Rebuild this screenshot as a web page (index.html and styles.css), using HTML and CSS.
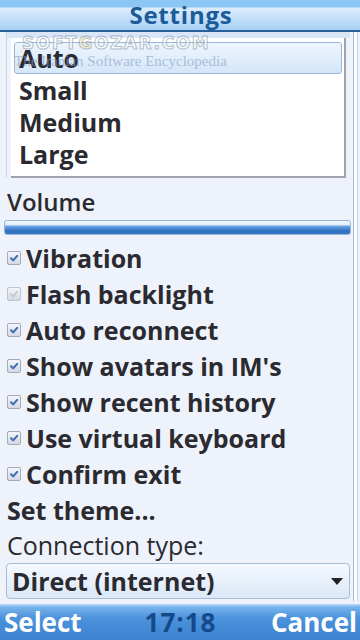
FILE: index.html
```html
<!DOCTYPE html>
<html>
<head>
<meta charset="utf-8">
<link rel="stylesheet" href="styles.css">
</head>
<body>
<div class="screen">
  <div class="header"><span class="title">Settings</span></div>
  <div class="body">
    <div class="main">
      <div class="frame">
        <div class="listbox">
          <div class="opt sel">Auto</div>
          <div class="opt">Small</div>
          <div class="opt">Medium</div>
          <div class="opt">Large</div>
        </div>
      </div>
      <div class="label vol">Volume</div>
      <div class="volume"></div>
      <div class="checks">
        <div class="check"><span class="box on"><svg viewBox="0 0 10 10"><path d="M2 5.2 L4.2 7.4 L8.2 2.8" /></svg></span>Vibration</div>
        <div class="check"><span class="box off"><svg viewBox="0 0 10 10"><path d="M2 5.2 L4.2 7.4 L8.2 2.8" /></svg></span>Flash backlight</div>
        <div class="check"><span class="box on"><svg viewBox="0 0 10 10"><path d="M2 5.2 L4.2 7.4 L8.2 2.8" /></svg></span>Auto reconnect</div>
        <div class="check"><span class="box on"><svg viewBox="0 0 10 10"><path d="M2 5.2 L4.2 7.4 L8.2 2.8" /></svg></span>Show avatars in IM's</div>
        <div class="check"><span class="box on"><svg viewBox="0 0 10 10"><path d="M2 5.2 L4.2 7.4 L8.2 2.8" /></svg></span>Show recent history</div>
        <div class="check"><span class="box on"><svg viewBox="0 0 10 10"><path d="M2 5.2 L4.2 7.4 L8.2 2.8" /></svg></span>Use virtual keyboard</div>
        <div class="check"><span class="box on"><svg viewBox="0 0 10 10"><path d="M2 5.2 L4.2 7.4 L8.2 2.8" /></svg></span>Confirm exit</div>
      </div>
      <div class="label item">Set theme...</div>
      <div class="label conn">Connection type:</div>
      <div class="dropdown"><span>Direct (internet)</span><svg class="arrow" viewBox="0 0 12 7"><path d="M0 0 H12 L6 7 Z"/></svg></div>
    </div>
    <div class="scroll"><div class="track"></div></div>
  </div>
  <div class="softkeys">
    <span class="sk left">Select</span>
    <span class="clock">17:18</span>
    <span class="sk right">Cancel</span>
  </div>
  <div class="watermark">
    <div class="wm1">SOFT<span class="wmg">G</span>OZAR.COM</div>
    <div class="wm2">The Iranian Software Encyclopedia</div>
  </div>
</div>
</body>
</html>
```

FILE: styles.css
```css
html, body {
  margin: 0;
  padding: 0;
}
body {
  width: 360px;
  height: 640px;
  overflow: hidden;
  background: #eef2fa;
  font-family: "Open Sans", "Liberation Sans", sans-serif;
  color: #2a2a30;
}
.screen {
  position: relative;
  width: 360px;
  height: 640px;
  display: flex;
  flex-direction: column;
}
.header {
  height: 30px;
  border-bottom: 2px solid #2a5f9a;
  background: linear-gradient(to bottom, #8cc6f4 0, #8cc6f4 7px, #dcecfc 8px, #c4e0fa 18px, #a6d0f4 30px);
  display: flex;
  justify-content: center;
  align-items: center;
}
.title {
  font-size: 24px;
  font-weight: 700;
  color: #1b5b98;
  letter-spacing: 0.8px;
  line-height: 1;
  padding-left: 2px;
  padding-bottom: 1px;
}
.body {
  flex: 1;
  display: flex;
  min-height: 0;
}
.main {
  width: 350px;
  display: flex;
  flex-direction: column;
}
.frame {
  margin: 0 0 0 6px;
  padding: 6px 0 0 4px;
  background: linear-gradient(to bottom, #d8e6f8 0, #d8e6f8 6px, transparent 6px);
  border-left: 1px solid #c8d4e4;
  width: 339px;
}
.listbox {
  background: #ffffff;
  width: 335px;
  border-right: 2px solid #a2a2ac;
  border-bottom: 2px solid #a2a2ac;
  padding: 4px 0 6px 3px;
  box-sizing: border-box;
  height: 140px;
}
.opt {
  height: 32px;
  line-height: 32px;
  font-size: 25px;
  font-weight: 700;
  padding-left: 5px;
  box-sizing: border-box;
  width: 328px;
}
.opt.sel {
  border: 1px solid #9db6d8;
  border-radius: 3px;
  background: linear-gradient(to bottom, #eef5fe, #d4e6fa);
  padding-left: 4px;
  line-height: 30px;
}
.label {
  font-size: 25px;
  font-weight: 700;
  padding-left: 7px;
  height: 36px;
  line-height: 36px;
}
.label.vol {
  margin-top: 6px;
  font-weight: 600;
  font-size: 24px;
}
.volume {
  margin-left: 4px;
  width: 347px;
  height: 15px;
  box-sizing: border-box;
  border: 1px solid #9ab4d4;
  border-radius: 3px;
  background: linear-gradient(to bottom, #f2f8fe 0, #e0ecf8 4px, #6aa6e6 5px, #2e6fc0 10px, #3c7cc8 14px);
}
.checks {
  margin-top: 5px;
  display: flex;
  flex-direction: column;
}
.check {
  height: 36px;
  display: flex;
  align-items: center;
  font-size: 25px;
  font-weight: 700;
  padding-left: 7px;
  white-space: nowrap;
}
.box {
  width: 14px;
  height: 14px;
  box-sizing: border-box;
  border: 1px solid #a4aab6;
  border-radius: 2px;
  background: linear-gradient(to bottom, #f4f6fa, #d2d8e2);
  margin-right: 5px;
  display: flex;
  align-items: center;
  justify-content: center;
}
.box svg {
  width: 10px;
  height: 10px;
}
.box path {
  fill: none;
  stroke-width: 2;
  stroke-linecap: round;
  stroke-linejoin: round;
}
.box.on path { stroke: #3f6ab0; }
.box.off path { stroke: #c4ccd6; }
.box.off { border-color: #c0c4cc; }
.label.conn {
  font-weight: 400;
  font-size: 25px;
  height: 35px;
  line-height: 35px;
}
.dropdown {
  margin-left: 6px;
  width: 344px;
  height: 36px;
  box-sizing: border-box;
  border: 1px solid #a9bcd6;
  border-radius: 4px;
  background: linear-gradient(to bottom, #f6f9fe, #dae8f8);
  display: flex;
  align-items: center;
  justify-content: space-between;
  padding: 0 6px 0 5px;
  font-size: 25px;
  font-weight: 700;
}
.arrow {
  width: 12px;
  height: 7px;
  fill: #1e2228;
}
.scroll {
  width: 10px;
  display: flex;
  justify-content: center;
}
.track {
  width: 3px;
  height: 100%;
  border-left: 1px solid #b4bcc8;
  border-right: 1px solid #c8d4e4;
  background: #f8fbff;
  margin-left: 1px;
}
.softkeys {
  height: 36px;
  margin-top: 3px;
  background: linear-gradient(to bottom, #bcdcf8 0, #78b4ec 3px, #4c92dc 14px, #3a82d0 36px);
  display: flex;
  align-items: center;
  justify-content: space-between;
  padding: 0 3px 0 4px;
  font-size: 26px;
  font-weight: 700;
}
.sk {
  color: #ffffff;
  width: 100px;
}
.sk.right { text-align: right; }
.clock {
  color: #15498a;
  letter-spacing: 1px;
}
.watermark {
  position: absolute;
  left: 14px;
  top: 35px;
  pointer-events: none;
  opacity: 0.6;
}
.wm1 {
  font-family: "DejaVu Sans", sans-serif;
  font-weight: 700;
  font-size: 17px;
  letter-spacing: 1.6px;
  color: #ffffff;
  -webkit-text-stroke: 1px #8a9aac;
  padding-left: 8px;
  line-height: 17px;
}
.wmg {
  color: #f2e2a0;
}
.wm2 {
  font-family: "Liberation Serif", serif;
  font-size: 15px;
  color: #8aa0c0;
  line-height: 15px;
  margin-top: 2px;
}
```
